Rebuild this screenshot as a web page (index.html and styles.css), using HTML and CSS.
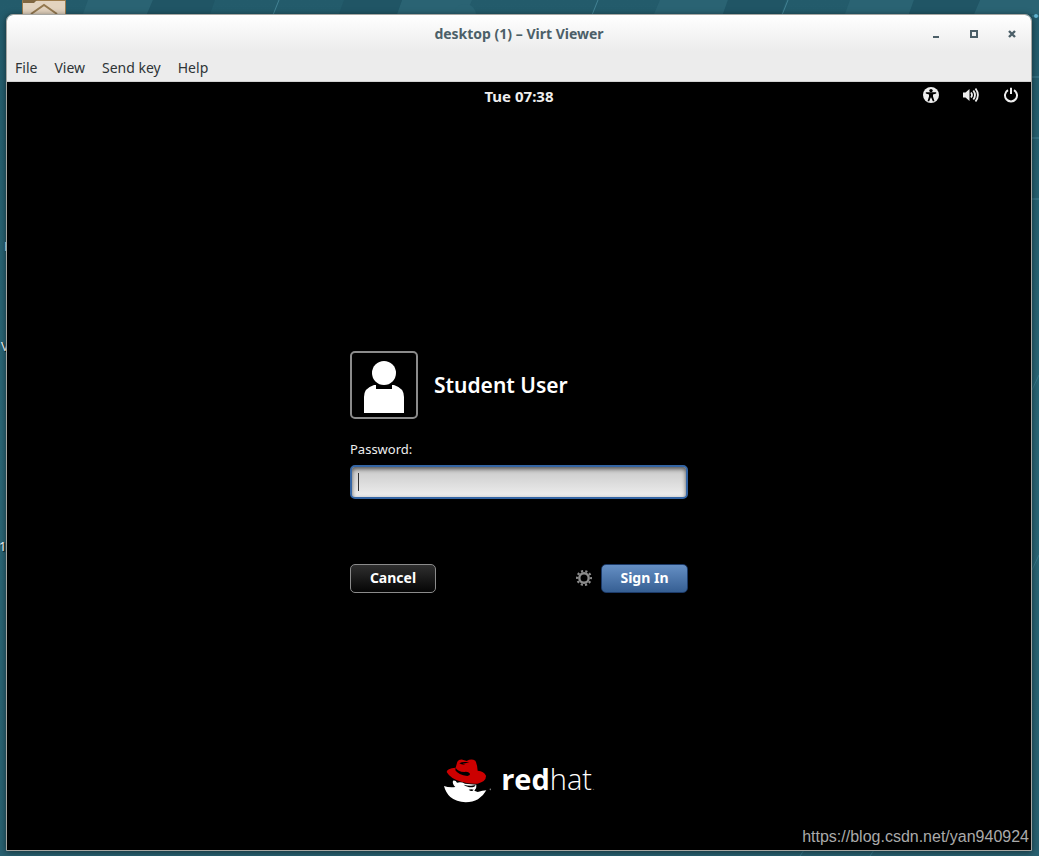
FILE: index.html
```html
<!DOCTYPE html>
<html lang="en">
<head>
<meta charset="utf-8">
<title>desktop (1) – Virt Viewer</title>
<link rel="stylesheet" href="styles.css">
</head>
<body>
<div class="desktop">
  <svg class="wallpaper" viewBox="0 0 1039 856" preserveAspectRatio="none" aria-hidden="true">
    <path class="band-light" d="M88 0h65l-6 14H83zM402 0h70l-6 14H397zM660 0h68l-5 14H654zM850 0h64l-5 14H845zM980 0h59v14H974z"/>
    <path class="band-dark" d="M153 0h62l-5 14h-63zM344 0h58l-5 14h-58zM728 0h58l-5 14h-58zM914 0h66l-6 14h-65z"/>
    <circle class="band-light" cx="465" cy="15" r="11"/>
    <path class="streak" d="M279 0l-6 15M598 0l-6 15M788 0l-6 15M1032 16h7M1032 77h7M1032 138h7M1032 199h7"/>
    <path class="streak faint" d="M1032 390l7-15M1032 570l7-15M800 856l4-6M870 856l4-6"/>
    <circle class="spark" cx="1036" cy="16" r="2"/>
  </svg>
  <svg class="folder" viewBox="0 0 44 16" aria-hidden="true">
    <path d="M.5 16V.5h43V16" fill="#e3d3bf" stroke="#9d7c4d"/>
    <path d="M1 0h14l-3 3H1z" fill="#806640"/>
    <path d="M9 14L22 5l13 9" fill="none" stroke="#94784f" stroke-width="2"/>
  </svg>
  <span class="icon-label label-r">F</span>
  <span class="icon-label label-v">V</span>
  <span class="icon-label label-1">1</span>

  <div class="window">
    <header class="chrome">
      <div class="titlebar">
        <h1 class="title">desktop (1) – Virt Viewer</h1>
        <div class="window-controls">
          <button type="button" aria-label="Minimize"><svg viewBox="0 0 10 10"><path d="M2 7h6v2H2z" fill="currentColor"/></svg></button>
          <button type="button" aria-label="Maximize"><svg viewBox="0 0 10 10"><path d="M2 2h6v6H2z" fill="none" stroke="currentColor" stroke-width="2"/></svg></button>
          <button type="button" aria-label="Close"><svg viewBox="0 0 10 10"><path d="M2 2l6 6M8 2L2 8" stroke="currentColor" stroke-width="2.4"/></svg></button>
        </div>
      </div>
      <nav class="menubar">
        <button type="button">File</button>
        <button type="button">View</button>
        <button type="button">Send key</button>
        <button type="button">Help</button>
      </nav>
    </header>

    <main class="screen">
      <div class="panel">
        <time class="clock">Tue 07:38</time>
        <div class="status">
          <button type="button" aria-label="Accessibility">
            <svg viewBox="0 0 16 16"><circle cx="8" cy="8" r="8" fill="#eee"/><circle cx="8" cy="3.6" r="1.7"/><path d="M2.8 5.2h10.4v1.4L10 7.5v2l1.5 4.7H9.8L8.2 10.5h-.4L6.2 14.2H4.5L6 9.5v-2l-3.2-.9z"/></svg>
          </button>
          <button type="button" aria-label="Volume">
            <svg viewBox="0 0 16 16"><path d="M0 5.5h2.500L6.500 2v12l-4-3.500H0z" fill="#eee"/><path d="M8 5.5q2 2.500 0 5M10.300 3.500q3.400 4.500 0 9M12.500 1.500q4.800 6.500 0 13" fill="none" stroke="#eee" stroke-width="1.800"/></svg>
          </button>
          <button type="button" aria-label="Power">
            <svg viewBox="0 0 16 16"><path d="M5 3.200a6 6 0 1 0 6 0M8 .8v6.200" fill="none" stroke="#eee" stroke-width="2"/></svg>
          </button>
        </div>
      </div>

      <form class="login" onsubmit="return false">
        <div class="user">
          <svg class="avatar" viewBox="0 0 64 64" aria-hidden="true"><circle cx="32" cy="20" r="12"/><path d="M12 60V44q0-9 10-12h2v4h16v-4h2q10 3 10 12v16z"/></svg>
          <h2>Student User</h2>
        </div>
        <label for="password">Password:</label>
        <div class="entry">
          <input id="password" type="password">
          <span class="caret"></span>
        </div>
        <div class="actions">
          <button class="cancel" type="button">Cancel</button>
          <button class="session" type="button" aria-label="Session options">
            <svg viewBox="0 0 16 16" fill="none" stroke="#8c8c8c"><circle cx="8" cy="8" r="4.700" stroke-width="2.400"/><circle cx="8" cy="8" r="6.900" stroke-width="2.200" stroke-dasharray="2.170 2.165" stroke-dashoffset="1.080"/></svg>
          </button>
          <button class="sign-in" type="submit">Sign In</button>
        </div>
      </form>

      <div class="brand">
        <svg class="hat" viewBox="30 24 144 135" aria-hidden="true">
          <path fill="#fff" d="M33 108Q47 113 67 111Q57 101 60 92Q68 90 72 98Q84 94 96 101L130 104Q132 114 124 122L134 126Q149 122 160 121Q151 138 135 148Q119 157 98 157Q70 156 52 141Q38 128 33 108z"/>
          <path fill="#000" d="M92 104q10 3 22 3l14-2-4 5q-12 3-20 0-7-1-12-6zM107 119q8-3 15 0l-4 4q-6 1-11-4z"/>
          <path fill="#c00" d="M68 53L73 35Q78 27 89 29L101 33Q115 25 127 32Q133 44 134 62Q153 63 159 77Q160 95 134 101Q108 103 85 95Q53 87 41 66Q41 55 68 53z"/>
          <path fill="#000" d="M68 53Q74 65 94 66Q106 64 111 71Q112 77 103 78Q76 75 67 61zM79 40q8-5 20-4l10 1-12 3-8 1 8 3q-11 1-18-4z"/>
          <circle cx="172" cy="118" r="2.500" fill="#777"/>
        </svg>
        <span class="wordmark"><b>red</b>hat<span class="mark">.</span></span>
      </div>
      <span class="watermark">https://blog.csdn.net/yan940924</span>
    </main>
  </div>
</div>
</body>
</html>
```
FILE: styles.css
```css
* { box-sizing: border-box; }
body {
  margin: 0;
  font-family: "Noto Sans", "Open Sans", sans-serif;
  font-size: 13px;
  line-height: 20px;
}
button {
  border: 0;
  padding: 0;
  background: none;
  color: inherit;
  font: inherit;
}
svg { display: block; }
h1, h2 { margin: 0; }

.desktop {
  position: relative;
  display: flex;
  min-height: 100vh;
  padding: 14px 7px 5px 6px;
  overflow: hidden;
  background: linear-gradient(#235b6b, #2a6575 50%, #286070);
}
.wallpaper { position: absolute; inset: 0; width: 100%; height: 100%; }
.band-light { fill: #2a6373; }
.band-dark { fill: #205565; }
.streak { fill: none; stroke: #438294; }
.faint { stroke: #36788a; }
.spark { fill: #64b5d2; }
.folder { position: absolute; left: 22px; top: 0; width: 44px; }
.icon-label { position: absolute; color: #fff; text-shadow: 1px 1px 1px #000; }
.label-r { left: 4px; top: 236px; }
.label-v { left: 1px; top: 336px; }
.label-1 { left: -1px; top: 536px; }

.window {
  position: relative;
  flex: 1;
  display: flex;
  flex-direction: column;
  border: 1px solid #a6a6a2;
  border-radius: 7px 7px 0 0;
  overflow: hidden;
  box-shadow: 0 1px 6px rgba(0, 0, 0, .5);
}
.chrome {
  background: linear-gradient(#fff, #ececec 36px);
  border-bottom: 1px solid #d2d2d2;
}
.titlebar {
  display: grid;
  grid-template-columns: 1fr auto 1fr;
  align-items: center;
  height: 39px;
}
.title {
  grid-column: 2;
  padding-bottom: 2px;
  color: #4c5f68;
  font-size: 14px;
  font-weight: 700;
}
.window-controls {
  display: flex;
  justify-content: flex-end;
  gap: 28px;
  padding: 0 14px 2px 0;
  color: #4c5f68;
}
.window-controls svg { width: 10px; height: 10px; }
.menubar {
  display: flex;
  gap: 17px;
  height: 27px;
  padding: 0 8px;
  color: #2e3436;
  font-size: 14px;
}
.menubar button { height: 28px; }

.screen {
  position: relative;
  flex: 1;
  display: grid;
  grid-template-rows: 28px 1fr auto;
  justify-items: center;
  padding-bottom: 44px;
  background: #000;
  color: #eee;
}
.panel {
  display: grid;
  grid-template-columns: 1fr auto 1fr;
  align-items: center;
  width: 100%;
}
.clock { grid-column: 2; font-weight: 700; font-size: 15px; }
.status {
  display: flex;
  justify-content: flex-end;
  gap: 24px;
  padding: 0 12px 2px 0;
}
.status svg { width: 16px; height: 16px; }

.login {
  align-self: center;
  display: flex;
  flex-direction: column;
  width: 338px;
  max-width: 100%;
  margin-top: 78px;
}
.user { display: flex; align-items: center; gap: 16px; margin-bottom: 20px; }
.avatar {
  width: 68px;
  height: 68px;
  border: 2px solid #8b8b8b;
  border-radius: 5px;
  fill: #fff;
}
.user h2 { color: #fff; font-size: 21px; font-weight: 600; line-height: 28px; }
.entry { position: relative; margin: 6px 0 65px; }
.entry input {
  display: block;
  width: 100%;
  height: 34px;
  padding: 0 7px;
  border: 2px solid #3465a4;
  border-radius: 5px;
  outline: 0;
  background: linear-gradient(#c8c8c8, #eee);
  box-shadow: inset 0 2px 4px rgba(0, 0, 0, .6);
  color: #222;
  caret-color: transparent;
}
.caret { position: absolute; left: 8px; top: 8px; width: 1px; height: 18px; background: #333; }
.actions { display: flex; align-items: center; }
.actions .cancel, .actions .sign-in {
  height: 29px;
  border: 1px solid #8b8b8b;
  border-radius: 5px;
  background: linear-gradient(#2f2f2f, #050505);
  color: #fff;
  font-size: 14px;
  font-weight: 700;
}
.actions .cancel { width: 86px; }
.actions .sign-in {
  width: 87px;
  border-color: #1c3a68;
  background: linear-gradient(#658fc4, #365f93);
}
.session { margin: 0 9px 0 auto; }
.session svg { width: 16px; height: 16px; }

.brand { display: flex; align-items: center; gap: 10px; }
.hat { width: 48px; height: 45px; }
.wordmark {
  padding-top: 4px;
  color: #fff;
  font-family: "Open Sans", "Noto Sans", sans-serif;
  font-size: 29px;
  font-weight: 300;
  line-height: 40px;
}
.wordmark b { font-weight: 700; }
.mark { color: #777; font-size: 12px; }
.watermark {
  position: absolute;
  right: 2px;
  bottom: 3px;
  color: #aaa;
  font-family: "Liberation Sans", Arial, sans-serif;
  font-size: 16px;
}
```
